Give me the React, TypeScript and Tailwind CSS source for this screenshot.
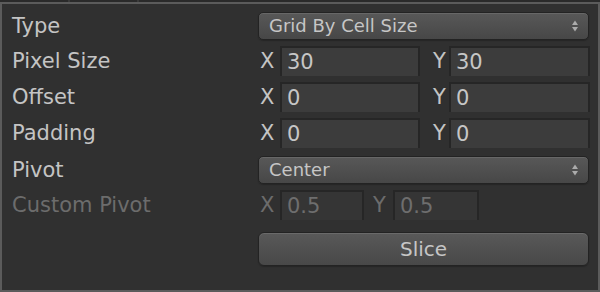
import type { ReactNode } from 'react';

// Unity-style sprite slicing panel (dark skin)

function Arrows() {
  return (
    <svg width="8" height="14" viewBox="0 0 8 14" className="shrink-0">
      <path d="M4 1.5 L7 6 L1 6 Z" fill="#ababab" />
      <path d="M4 12.5 L7 8 L1 8 Z" fill="#ababab" />
    </svg>
  );
}

function Dropdown({ value }: { value: string }) {
  return (
    <div className="flex h-[28px] w-[331px] items-center justify-between rounded-[5px] border border-[#232323] bg-gradient-to-b from-[#585858] to-[#474747] pl-[10px] pr-[9px] text-[18px] text-[#c6c6c6] shadow-[inset_0_1px_0_#676767,0_1px_1px_#262626]">
      <span className="leading-none">{value}</span>
      <Arrows />
    </div>
  );
}

function Field({ value, w, disabled }: { value: string; w: string; disabled?: boolean }) {
  return (
    <div className={`${w} h-[30px] bg-[#262626] px-[2px] pt-[2px]`}>
      <div
        className={`flex h-full items-center pl-[5px] text-[21px] leading-none ${
          disabled ? 'bg-[#353535] text-[#6e6e6e]' : 'bg-[#3c3c3c] text-[#c6c6c6]'
        }`}
      >
        {value}
      </div>
    </div>
  );
}

function Row({ label, children, disabled }: { label: string; children: ReactNode; disabled?: boolean }) {
  return (
    <div className="flex items-center">
      <div className={`w-[246px] text-[21px] leading-none ${disabled ? 'text-[#6c6c6c]' : 'text-[#c4c4c4]'}`}>
        {label}
      </div>
      {children}
    </div>
  );
}

function XY({ x, y }: { x: string; y: string }) {
  return (
    <div className="flex items-center text-[21px] leading-none text-[#c4c4c4]">
      <span className="w-[22px] pl-[2px]">X</span>
      <Field value={x} w="w-[140px]" />
      <span className="w-[29px] pl-[13px]">Y</span>
      <Field value={y} w="w-[141px]" />
    </div>
  );
}

export default function App() {
  return (
    <div className="h-[292px] w-[600px] bg-[#303030] font-['DejaVu_Sans',sans-serif]">
      <div className="flex h-[2px]">
        <div className="w-[68px] bg-[#2a2a2a]" />
        <div className="w-[2px] bg-[#3a3a3a]" />
        <div className="w-[67px] bg-[#2a2a2a]" />
        <div className="w-[2px] bg-[#3a3a3a]" />
        <div className="flex-1 bg-[#2a2a2a]" />
      </div>
      <div className="flex h-[290px] flex-col border-2 border-[#5b5b5b] pl-[10px] pt-[8px]">
        <Row label="Type">
          <Dropdown value="Grid By Cell Size" />
        </Row>
        <div className="mt-[6px]">
          <Row label="Pixel Size">
            <XY x="30" y="30" />
          </Row>
        </div>
        <div className="mt-[6px]">
          <Row label="Offset">
            <XY x="0" y="0" />
          </Row>
        </div>
        <div className="mt-[6px]">
          <Row label="Padding">
            <XY x="0" y="0" />
          </Row>
        </div>
        <div className="mt-[8px]">
          <Row label="Pivot">
            <Dropdown value="Center" />
          </Row>
        </div>
        <div className="mt-[6px]">
          <Row label="Custom Pivot" disabled>
            <div className="flex items-center text-[21px] leading-none text-[#6c6c6c]">
              <span className="w-[22px] pl-[2px]">X</span>
              <Field value="0.5" w="w-[84px]" disabled />
              <span className="w-[29px] pl-[9px]">Y</span>
              <Field value="0.5" w="w-[86px]" disabled />
            </div>
          </Row>
        </div>
        <div className="mt-[12px] flex">
          <div className="w-[246px]" />
          <div className="flex h-[34px] w-[331px] items-center justify-center rounded-[6px] border border-[#232323] bg-gradient-to-b from-[#595959] to-[#484848] text-[20px] leading-none text-[#c6c6c6] shadow-[inset_0_1px_0_#6a6a6a,0_1px_1px_#262626]">
            Slice
          </div>
        </div>
      </div>
    </div>
  );
}
